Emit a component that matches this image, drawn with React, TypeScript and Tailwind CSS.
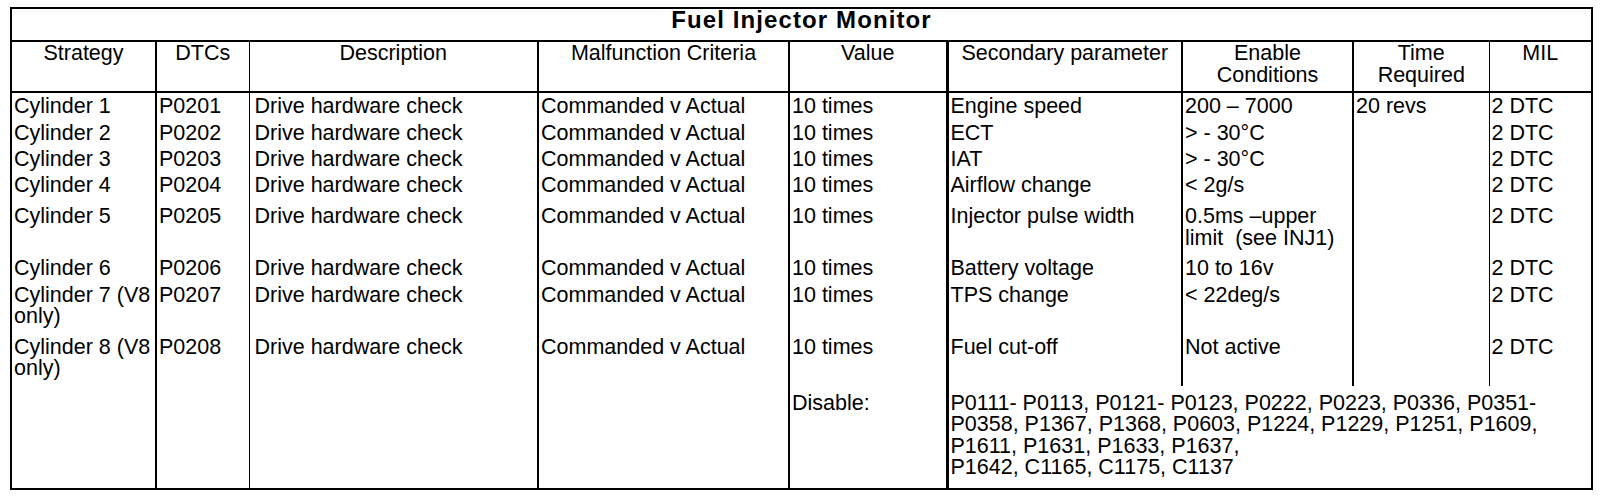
import React from 'react';

// vertical rule on the left of each column (the table edge included)
const colLine = [
  'border-l-2',
  'border-l-2',
  'border-l',
  'border-l-2',
  'border-l-2',
  'border-l-[3px]',
  'border-l-2',
  'border-l-2',
  'border-l',
];

const colWidths = [
  'w-[145px]',
  'w-[93px]',
  'w-[289px]',
  'w-[251px]',
  'w-[158px]',
  'w-[235px]',
  'w-[171px]',
  'w-[136px]',
  'w-[103px]',
];

// the source document spaces its rows a little unevenly
const rowPad = [
  'pt-[3px] pb-[2px]',
  'pt-[3px] pb-[2px]',
  'pt-[3px] pb-[1px]',
  'pt-[3px] pb-[7px]',
  'pt-[3px] pb-[6px]',
  'pt-[3px] pb-[2px]',
  'pt-[3px] pb-[6px]',
  'pt-[3px] pb-[6px]',
];

const headers: React.ReactNode[] = [
  'Strategy',
  'DTCs',
  'Description',
  'Malfunction Criteria',
  'Value',
  'Secondary parameter',
  <>Enable<br />Conditions</>,
  <>Time<br />Required</>,
  'MIL',
];

const rows: React.ReactNode[][] = [
  ['Cylinder 1', 'P0201', 'Drive hardware check', 'Commanded v Actual', '10 times', 'Engine speed', '200 – 7000', '20 revs', '2 DTC'],
  ['Cylinder 2', 'P0202', 'Drive hardware check', 'Commanded v Actual', '10 times', 'ECT', '> - 30°C', '', '2 DTC'],
  ['Cylinder 3', 'P0203', 'Drive hardware check', 'Commanded v Actual', '10 times', 'IAT', '> - 30°C', '', '2 DTC'],
  ['Cylinder 4', 'P0204', 'Drive hardware check', 'Commanded v Actual', '10 times', 'Airflow change', '< 2g/s', '', '2 DTC'],
  ['Cylinder 5', 'P0205', 'Drive hardware check', 'Commanded v Actual', '10 times', 'Injector pulse width', <>0.5ms –upper<br />limit&nbsp; (see INJ1)</>, '', '2 DTC'],
  ['Cylinder 6', 'P0206', 'Drive hardware check', 'Commanded v Actual', '10 times', 'Battery voltage', '10 to 16v', '', '2 DTC'],
  [<>Cylinder 7 (V8<br />only)</>, 'P0207', 'Drive hardware check', 'Commanded v Actual', '10 times', 'TPS change', '< 22deg/s', '', '2 DTC'],
  [<>Cylinder 8 (V8<br />only)</>, 'P0208', 'Drive hardware check', 'Commanded v Actual', '10 times', 'Fuel cut-off', 'Not active', '', '2 DTC'],
];

const cellPad = (i: number) => (i === 2 ? 'pl-[5px] pr-[2px]' : 'px-[2px]');

export default function App() {
  return (
    <div className="min-h-[502px] bg-white pl-[10px] pt-[7px] font-['Liberation_Sans',Arial,sans-serif] text-black">
      <table className="w-[1581px] table-fixed border-collapse border-black text-[21.5px] leading-[21.5px]">
        <colgroup>
          {colWidths.map((w, i) => (
            <col key={i} className={w} />
          ))}
        </colgroup>
        <thead>
          <tr>
            <th
              colSpan={9}
              className="h-[33px] border-2 border-black p-0 text-center align-top text-[24px] font-bold leading-[22px] tracking-[1.1px]"
            >
              Fuel Injector Monitor
            </th>
          </tr>
          <tr>
            {headers.map((h, i) => (
              <th
                key={i}
                className={`${colLine[i]} ${i === 8 ? 'border-r-2' : ''} h-[51px] border-b-2 border-black px-[2px] pt-0 text-center align-top font-normal leading-[22px]`}
              >
                {h}
              </th>
            ))}
          </tr>
        </thead>
        <tbody>
          {rows.map((r, ri) => (
            <tr key={ri}>
              {r.map((c, i) => (
                <td
                  key={i}
                  className={`${colLine[i]} ${i === 8 ? 'border-r-2' : ''} border-black ${cellPad(i)} ${rowPad[ri]} align-top whitespace-nowrap`}
                >
                  {c}
                </td>
              ))}
            </tr>
          ))}
          <tr>
            {[0, 1, 2, 3].map((i) => (
              <td key={i} className={`${colLine[i]} border-b-2 border-black px-[2px] pt-[7px] pb-[9px]`} />
            ))}
            <td className="border-l-2 border-b-2 border-black px-[2px] pt-[7px] pb-[9px] align-top">Disable:</td>
            <td
              colSpan={4}
              className="border-l-[3px] border-r-2 border-b-2 border-black px-[2px] pt-[7px] pb-[9px] align-top"
            >
              P0111- P0113, P0121- P0123, P0222, P0223, P0336, P0351-
              <br />
              P0358, P1367, P1368, P0603, P1224, P1229, P1251, P1609,
              <br />
              P1611, P1631, P1633, P1637,
              <br />
              P1642, C1165, C1175, C1137
            </td>
          </tr>
        </tbody>
      </table>
    </div>
  );
}
